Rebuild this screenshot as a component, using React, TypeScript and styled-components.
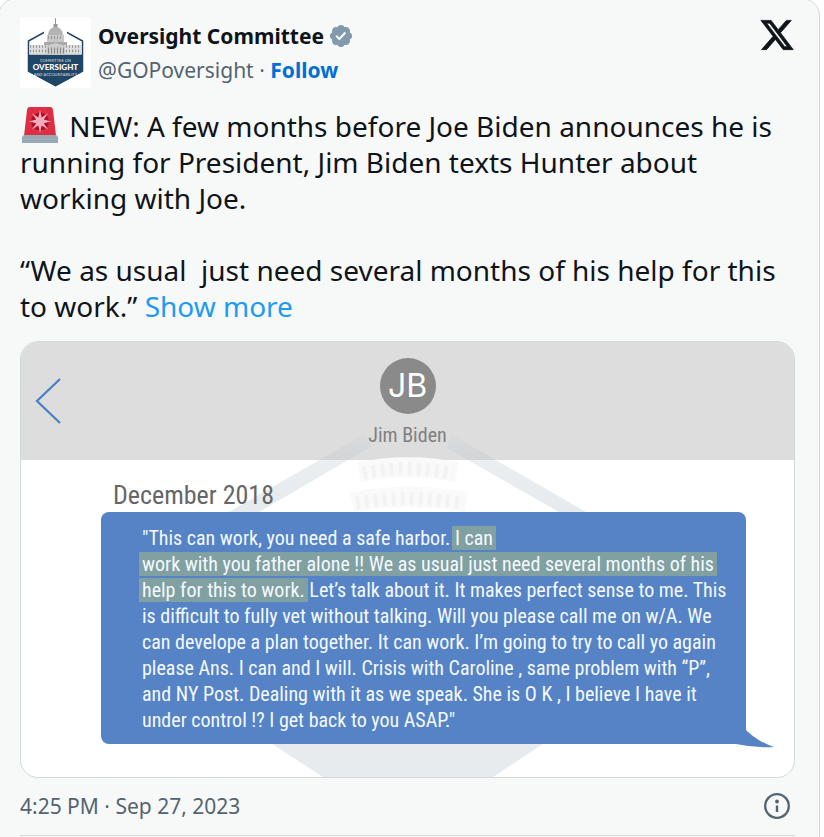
import React from "react";
import styled, { createGlobalStyle } from "styled-components";

const Global = createGlobalStyle`
  *, *::before, *::after { box-sizing: border-box; }
  body {
    margin: 0;
    background: #ffffff;
    color: #0f1419;
    font-family: "Noto Sans", "Open Sans", sans-serif;
  }
`;

const Card = styled.article`
  margin: -2px 4px 0 -2px;
  padding: 18px 24px 24px 21px;
  background: #f7f9f9;
  border: 1px solid #cfd9de;
  border-radius: 18px;
`;

const Header = styled.header`
  display: flex;
  align-items: flex-start;
`;

const Avatar = styled.a`
  display: block;
  width: 71px;
  height: 71px;
  margin-right: 7px;
  svg { display: block; }
`;

const Author = styled.div`
  flex: 1;
  display: flex;
  flex-direction: column;
  color: #536471;
  font-size: 21px;
  line-height: 34px;
  padding-top: 2px;
`;

const NameLink = styled.a`
  display: flex;
  align-items: center;
  gap: 4px;
  color: #0f1419;
  font-weight: 700;
  text-decoration: none;
`;

const Handle = styled.a`
  color: #536471;
  text-decoration: none;
`;

const Follow = styled.a`
  color: #006fd6;
  font-weight: 700;
  text-decoration: none;
`;

const LogoLink = styled.a`
  display: block;
  svg { display: block; }
`;

const Body = styled.p`
  margin: 19px 0 0;
  font-size: 28px;
  line-height: 36px;
  white-space: pre-wrap;
  svg { margin: 0 4px 0 2px; vertical-align: -6px; }
`;

const MoreLink = styled.a`
  color: #1d9bf0;
  text-decoration: none;
`;

const Media = styled.figure`
  position: relative;
  margin: 17px 0 0;
  padding-bottom: 33px;
  overflow: hidden;
  background: #ffffff;
  border: 1px solid #cfd9de;
  border-radius: 18px;
  font-family: "Roboto Condensed", Roboto, sans-serif;
`;

const Watermark = styled.svg`
  position: absolute;
  top: 0;
  left: 0;
  width: 100%;
  height: 100%;
`;

const ChatHeader = styled.div`
  display: grid;
  grid-template-columns: 56px 1fr 56px;
  align-items: center;
  height: 118px;
  background: #dddddd;
`;

const BackButton = styled.button`
  display: flex;
  padding: 0 0 0 13px;
  border: 0;
  background: none;
`;

const Contact = styled.div`
  display: flex;
  flex-direction: column;
  align-self: start;
  align-items: center;
  gap: 8px;
  padding-top: 16px;
  color: #808080;
  font-size: 20px;
  line-height: 26px;
`;

const Initials = styled.div`
  width: 56px;
  height: 56px;
  border-radius: 50%;
  background: #8a8a8a;
  color: #ffffff;
  font-family: Inter, sans-serif;
  font-size: 32px;
  line-height: 56px;
  text-align: center;
`;

const Thread = styled.div`
  position: relative;
  padding: 18px 48px 0 80px;
`;

const DateLabel = styled.div`
  padding-left: 12px;
  color: #666666;
  font-size: 26px;
  line-height: 34px;
`;

const Bubble = styled.blockquote`
  position: relative;
  margin: 0;
  padding: 13px 8px 11px 41px;
  border-radius: 8px;
  background: #5583c6;
  color: #f4f9ff;
  font-size: 20px;
  line-height: 26px;
`;

const Highlight = styled.mark`
  background: #80a0a2;
  box-shadow: 3px 0 0 #80a0a2, -3px 0 0 #80a0a2;
  box-decoration-break: clone;
  -webkit-box-decoration-break: clone;
  color: inherit;
`;

const Tail = styled.svg`
  position: absolute;
  right: -28px;
  bottom: -4px;
`;

const Footer = styled.footer`
  display: flex;
  align-items: center;
  justify-content: space-between;
  height: 58px;
  padding-bottom: 2px;
  border-bottom: 1px solid #cfd9de;
  color: #536471;
  font-size: 21px;
`;

const InfoButton = styled.button`
  display: flex;
  padding: 0;
  margin-right: 4px;
  border: 0;
  background: none;
`;

const Seal = () => (
  <svg width="71" height="71" viewBox="0 0 71 71" role="img" aria-label="Oversight Committee">
    <rect width="71" height="71" rx="3" fill="#fff" />
    <path d="M8.500 24 L35.500 9 L62.500 24 V54 L35.500 68.500 L8.500 54Z" fill="#fff" stroke="#1f4666" strokeWidth="1.500" />
    <path d="M8 37.500H63V54.500L35.500 69.500 8 54.500Z" fill="#1f4666" />
    <path d="M24 5h23v12l3 9H21l3-9z" fill="#fff" />
    <path d="M35 1h1v7h-1zM33.500 7h4v5h-4z" fill="#999" />
    <path d="M28 18Q29 10 35.500 10T43 18Z" fill="#b4b4b4" />
    <path d="M27 18h17v7H27z" fill="#c8c8c8" />
    <path d="M24 25h23v3H24z" fill="#a8a8a8" />
    <path d="M9.500 28h52v9.500h-52z" fill="#ddd" />
    <path d="M10 29.500h51M10 34h51M28 20.500h15" stroke="#929292" strokeWidth="2.500" strokeDasharray="1 2" />
    <path d="M26 29l9.500-3 9.500 3v8.500H26z" fill="#ccc" />
    <path d="M28 33.500h16" stroke="#868686" strokeWidth="6" strokeDasharray="1 2" />
    <g fill="#fff" textAnchor="middle" fontFamily="Lato, sans-serif">
      <text x="35.500" y="45" fontSize="4" opacity=".8">COMMITTEE ON</text>
      <text x="35.500" y="52.500" fontSize="8" fontWeight="900">OVERSIGHT</text>
      <text x="35.500" y="58.500" fontSize="4" opacity=".8">AND ACCOUNTABILITY</text>
    </g>
  </svg>
);

const Verified = () => (
  <svg width="26" height="26" viewBox="0 0 22 22" aria-label="Verified" fill="#829aab">
    <path d="M20.396 11c-.018-.646-.215-1.275-.57-1.816-.354-.540-.852-.972-1.438-1.246.223-.607.270-1.264.140-1.897-.131-.634-.437-1.218-.882-1.687-.470-.445-1.053-.750-1.687-.882-.633-.130-1.290-.083-1.897.140-.273-.587-.704-1.086-1.245-1.440S11.647 1.620 11 1.604c-.646.017-1.273.213-1.813.568s-.969.854-1.240 1.440c-.608-.223-1.267-.272-1.902-.140-.635.130-1.220.436-1.690.882-.445.470-.749 1.055-.878 1.688-.130.633-.080 1.290.144 1.896-.587.274-1.087.705-1.443 1.245-.356.540-.555 1.170-.574 1.817.020.647.218 1.276.574 1.817.356.540.856.972 1.443 1.245-.224.606-.274 1.263-.144 1.896.130.634.433 1.218.877 1.688.470.443 1.054.747 1.687.878.633.132 1.290.084 1.897-.136.274.586.705 1.084 1.246 1.439.540.354 1.170.551 1.816.569.647-.016 1.276-.213 1.817-.567s.972-.854 1.245-1.440c.604.239 1.266.296 1.903.164.636-.132 1.220-.447 1.680-.907.460-.460.776-1.044.908-1.681s.075-1.299-.165-1.903c.586-.274 1.084-.705 1.439-1.246.354-.540.551-1.170.569-1.816zM9.662 14.850l-3.429-3.428 1.293-1.302 2.072 2.072 4.400-4.794 1.347 1.246z" />
  </svg>
);

const XLogo = () => (
  <svg width="36" height="36" viewBox="0 0 24 24" fill="#0f1419" stroke="#0f1419" strokeWidth=".5" aria-hidden="true">
    <path d="M18.244 2.250h3.308l-7.227 8.260 8.502 11.240H16.170l-5.214-6.817L4.990 21.750H1.680l7.730-8.835L1.254 2.250H8.080l4.713 6.231zm-1.161 17.520h1.833L7.084 4.126H5.117z" />
  </svg>
);

const Siren = () => (
  <svg width="36" height="36" viewBox="0 0 36 36" role="img" aria-label="Police car light">
    <path d="M2 29L5 3Q5.300 0 8 0H28Q30.700 0 31 3L34 29Z" fill="#dd2e44" />
    <circle cx="18" cy="14.500" r="9" fill="#a0041e" opacity=".75" />
    <path d="M18 3l1.700 7.500 6.300-4.200-4.200 6.200 7.400 2-7.400 1.700 4.200 6.400-6.300-4.200L18 26l-1.700-7.600-6.300 4.200 4.200-6.400-7.400-1.700 7.400-2-4.200-6.200 6.300 4.200z" fill="#f4abba" />
    <path d="M3 28H33Q36 28 36 31V36H0V31Q0 28 3 28Z" fill="#99aab5" />
  </svg>
);

const InfoIcon = () => (
  <svg width="28" height="28" viewBox="0 0 28 28" aria-hidden="true">
    <circle cx="14" cy="14" r="11.800" fill="none" stroke="#536471" strokeWidth="2.300" />
    <circle cx="14" cy="9.500" r="1.900" fill="#536471" />
    <path d="M12.800 13.500h2.400v6.500h-2.400z" fill="#536471" />
  </svg>
);

const SealWatermark = () => (
  <Watermark viewBox="0 0 773 434" preserveAspectRatio="xMidYMin slice" aria-hidden="true">
    <defs>
      <linearGradient id="beam" x1="0" y1="0" x2="0" y2="1">
        <stop offset="0" stopColor="#aabac4" stopOpacity="0.08" />
        <stop offset="0.4" stopColor="#aabac4" stopOpacity="0.25" />
        <stop offset="1" stopColor="#aabac4" stopOpacity="0.3" />
      </linearGradient>
    </defs>
    <path d="M343 92L206 171H236L351 104ZM430 92L567 171H540L426 106Z" fill="url(#beam)" />
    <path d="M250 400H523L469 436H305Z" fill="#e8ebee" />
    <g fill="none">
      <path d="M338 130Q387 120 436 130M331 160Q387 149 445 160" stroke="#fafafa" strokeWidth="20" />
      <path d="M342 131Q387 122 432 131M335 161Q387 151 441 161" stroke="#f3f3f3" strokeWidth="13" strokeDasharray="4 5" />
    </g>
  </Watermark>
);

export default function App() {
  return (
    <>
      <Global />
      <Card>
        <Header>
          <Avatar href="#profile"><Seal /></Avatar>
          <Author>
            <NameLink href="#profile">Oversight Committee<Verified /></NameLink>
            <div>
              <Handle href="#profile">@GOPoversight</Handle> · <Follow href="#follow">Follow</Follow>
            </div>
          </Author>
          <LogoLink href="#post" aria-label="View on X"><XLogo /></LogoLink>
        </Header>
        <Body>
          <Siren />{" NEW: A few months before Joe Biden announces he is running for President, Jim Biden texts Hunter about working with Joe.\n\n“We as usual  just need several months of his help for this to work.” "}
          <MoreLink href="#more">Show more</MoreLink>
        </Body>
        <Media>
          <ChatHeader>
            <BackButton aria-label="Back">
              <svg width="30" height="48" viewBox="0 0 30 48" fill="none" stroke="#4b7fc4" strokeWidth="2.200">
                <path d="M26 2L3 24L26 46" />
              </svg>
            </BackButton>
            <Contact>
              <Initials>JB</Initials>
              <span>Jim Biden</span>
            </Contact>
          </ChatHeader>
          <SealWatermark />
          <Thread>
            <DateLabel>December 2018</DateLabel>
            <Bubble>
              "This can work, you need a safe harbor. <Highlight>I can<br />
              work with you father alone !! We as usual just need several months of his<br />
              help for this to work.</Highlight> Let’s talk about it. It makes perfect sense to me. This<br />
              is difficult to fully vet without talking. Will you please call me on w/A. We<br />
              can develope a plan together. It can work. I’m going to try to call yo again<br />
              please Ans. I can and I will. Crisis with Caroline , same problem with “P”,<br />
              and NY Post. Dealing with it as we speak. She is O K , I believe I have it<br />
              under control !? I get back to you ASAP."
              <Tail width="50" height="20" viewBox="0 0 50 20" fill="#5583c6" aria-hidden="true">
                <path d="M20 0Q32 13 50 19Q30 20 12 16V0Z" />
              </Tail>
            </Bubble>
          </Thread>
        </Media>
        <Footer>
          <time dateTime="2023-09-27T16:25">4:25 PM · Sep 27, 2023</time>
          <InfoButton aria-label="Information"><InfoIcon /></InfoButton>
        </Footer>
      </Card>
    </>
  );
}
